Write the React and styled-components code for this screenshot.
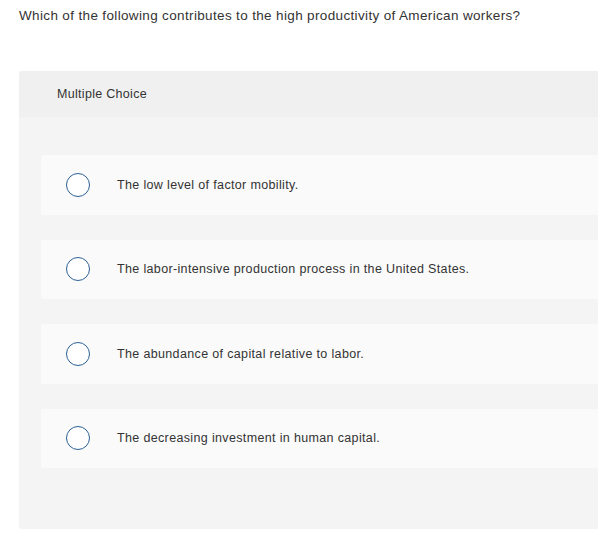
import React from 'react';
import styled, { createGlobalStyle } from 'styled-components';

const GlobalStyle = createGlobalStyle`
  body {
    margin: 0;
    background: #fff;
    font-family: "Liberation Sans", Arial, sans-serif;
    color: #333;
  }
`;

const Page = styled.div`
  width: 598px;
  overflow: hidden;
  padding-top: 7px;
`;

const Question = styled.p`
  margin: 0 0 0 19px;
  font-size: 13.5px;
  letter-spacing: 0.35px;
  line-height: 17px;
  color: #333;
`;

const Panel = styled.div`
  margin: 47px -20px 0 19px;
  background: #f4f4f4;
  border-radius: 3px;
  padding-bottom: 61px;
`;

const PanelHeader = styled.div`
  background: #f0f0f0;
  height: 46px;
  display: flex;
  align-items: center;
  padding-left: 38px;
  font-size: 12.5px;
  letter-spacing: 0.3px;
  color: #333;
  border-radius: 3px 3px 0 0;
`;

const Options = styled.div`
  display: flex;
  flex-direction: column;
  gap: 25px;
  padding: 38px 0 0 22px;
`;

const Option = styled.label`
  display: flex;
  align-items: center;
  height: 59.5px;
  background: #fafafa;
  border-radius: 3px;
  padding-left: 24.5px;
  cursor: pointer;
`;

const Radio = styled.span`
  width: 22px;
  height: 22px;
  border: 1.5px solid #2b5f93;
  border-radius: 50%;
  background: #fff;
  flex-shrink: 0;
`;

const OptionText = styled.span`
  margin-left: 27.5px;
  font-size: 12.5px;
  letter-spacing: 0.35px;
  color: #333;
`;

const choices = [
  'The low level of factor mobility.',
  'The labor-intensive production process in the United States.',
  'The abundance of capital relative to labor.',
  'The decreasing investment in human capital.',
];

export default function App() {
  return (
    <Page>
      <GlobalStyle />
      <Question>Which of the following contributes to the high productivity of American workers?</Question>
      <Panel>
        <PanelHeader>Multiple Choice</PanelHeader>
        <Options>
          {choices.map((c) => (
            <Option key={c}>
              <Radio />
              <OptionText>{c}</OptionText>
            </Option>
          ))}
        </Options>
      </Panel>
    </Page>
  );
}
